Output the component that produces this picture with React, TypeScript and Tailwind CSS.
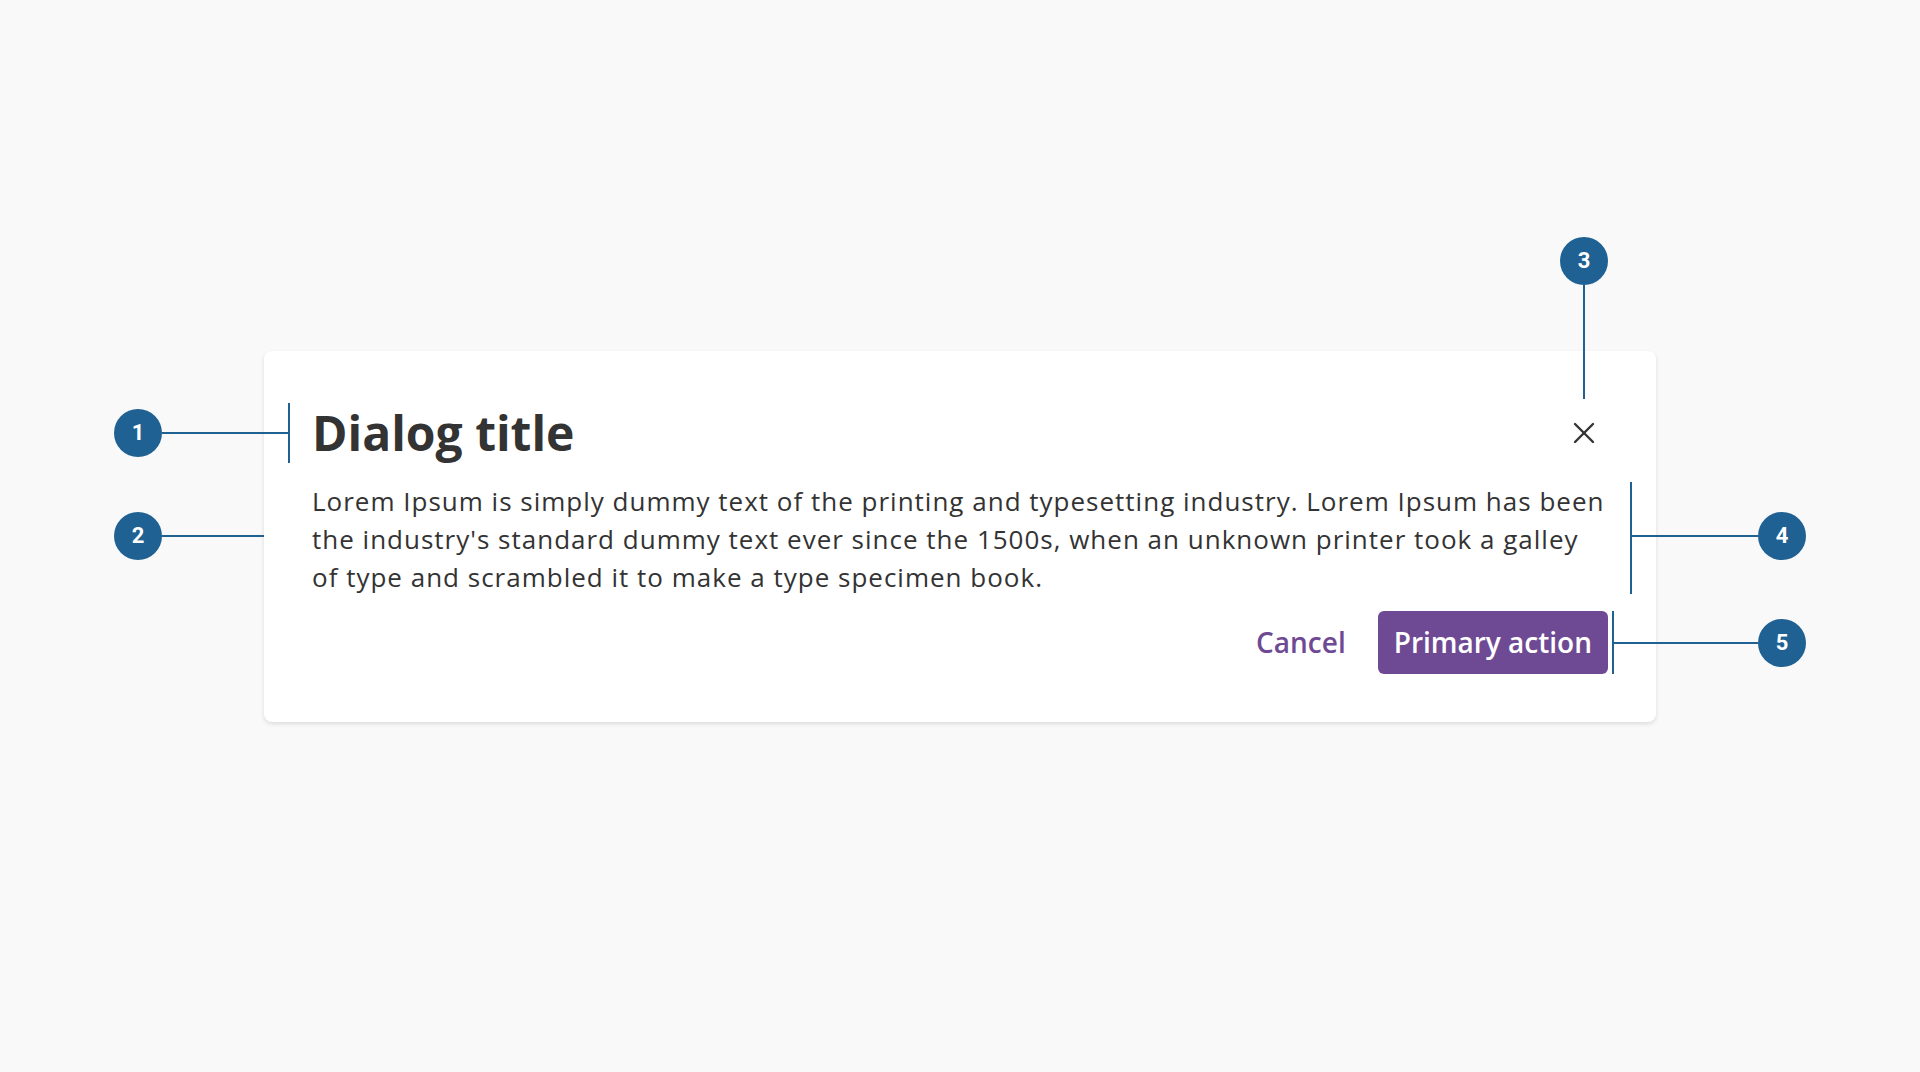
import { X } from "lucide-react";

const FONT = "font-['Open_Sans',sans-serif]";

function Marker({ n, className }: { n: number; className: string }) {
  return (
    <div
      className={`absolute flex h-12 w-12 items-center justify-center rounded-full bg-[#1f6192] font-['Roboto',sans-serif] text-[22px] font-bold text-white ${className}`}
    >
      {n}
    </div>
  );
}

export default function App() {
  return (
    <div className={`flex min-h-screen items-center justify-center bg-[#f9f9f9] ${FONT} text-[#333333]`}>
      <div className="relative flex w-[1392px] flex-col rounded-lg bg-white px-12 pt-[52px] pb-12 shadow-[0_2px_4px_rgba(0,0,0,0.12)]">
        {/* header */}
        <div className="flex h-[60px] items-center justify-between">
          <h1 className="text-[48px] font-bold leading-[60px]">Dialog title</h1>
          <button className="flex h-12 w-12 items-center justify-center text-[#333333]">
            <X size={36} strokeWidth={1.6} />
          </button>
        </div>

        {/* body */}
        <p className="mt-[19px] text-[26px] leading-[38px] tracking-[1px]">
          Lorem Ipsum is simply dummy text of the printing and typesetting industry. Lorem Ipsum has been the
          industry's standard dummy text ever since the 1500s, when an unknown printer took a galley of type and
          scrambled it to make a type specimen book.
        </p>

        {/* actions */}
        <div className="mt-[15px] flex items-center justify-end gap-4">
          <button className="h-[63px] px-4 text-[28px] font-semibold text-[#6f4a94]">Cancel</button>
          <button className="h-[63px] rounded-md bg-[#6f4a94] px-4 text-[28px] font-semibold text-white">
            Primary action
          </button>
        </div>

        {/* annotations */}
        <Marker n={1} className="-left-[150px] top-[58px]" />
        <div className="absolute -left-[102px] top-[81px] h-[2px] w-[127px] bg-[#1f6192]" />
        <div className="absolute left-[24px] top-[52px] h-[60px] w-[2px] bg-[#1f6192]" />

        <Marker n={2} className="-left-[150px] top-[161px]" />
        <div className="absolute -left-[102px] top-[184px] h-[2px] w-[102px] bg-[#1f6192]" />

        <Marker n={3} className="left-[1296px] -top-[114px]" />
        <div className="absolute left-[1319px] -top-[66px] h-[114px] w-[2px] bg-[#1f6192]" />

        <div className="absolute left-[1366px] top-[131px] h-[112px] w-[2px] bg-[#1f6192]" />
        <div className="absolute left-[1366px] top-[184px] h-[2px] w-[128px] bg-[#1f6192]" />
        <Marker n={4} className="left-[1494px] top-[161px]" />

        <div className="absolute left-[1348px] top-[260px] h-[63px] w-[2px] bg-[#1f6192]" />
        <div className="absolute left-[1348px] top-[291px] h-[2px] w-[146px] bg-[#1f6192]" />
        <Marker n={5} className="left-[1494px] top-[268px]" />
      </div>
    </div>
  );
}
